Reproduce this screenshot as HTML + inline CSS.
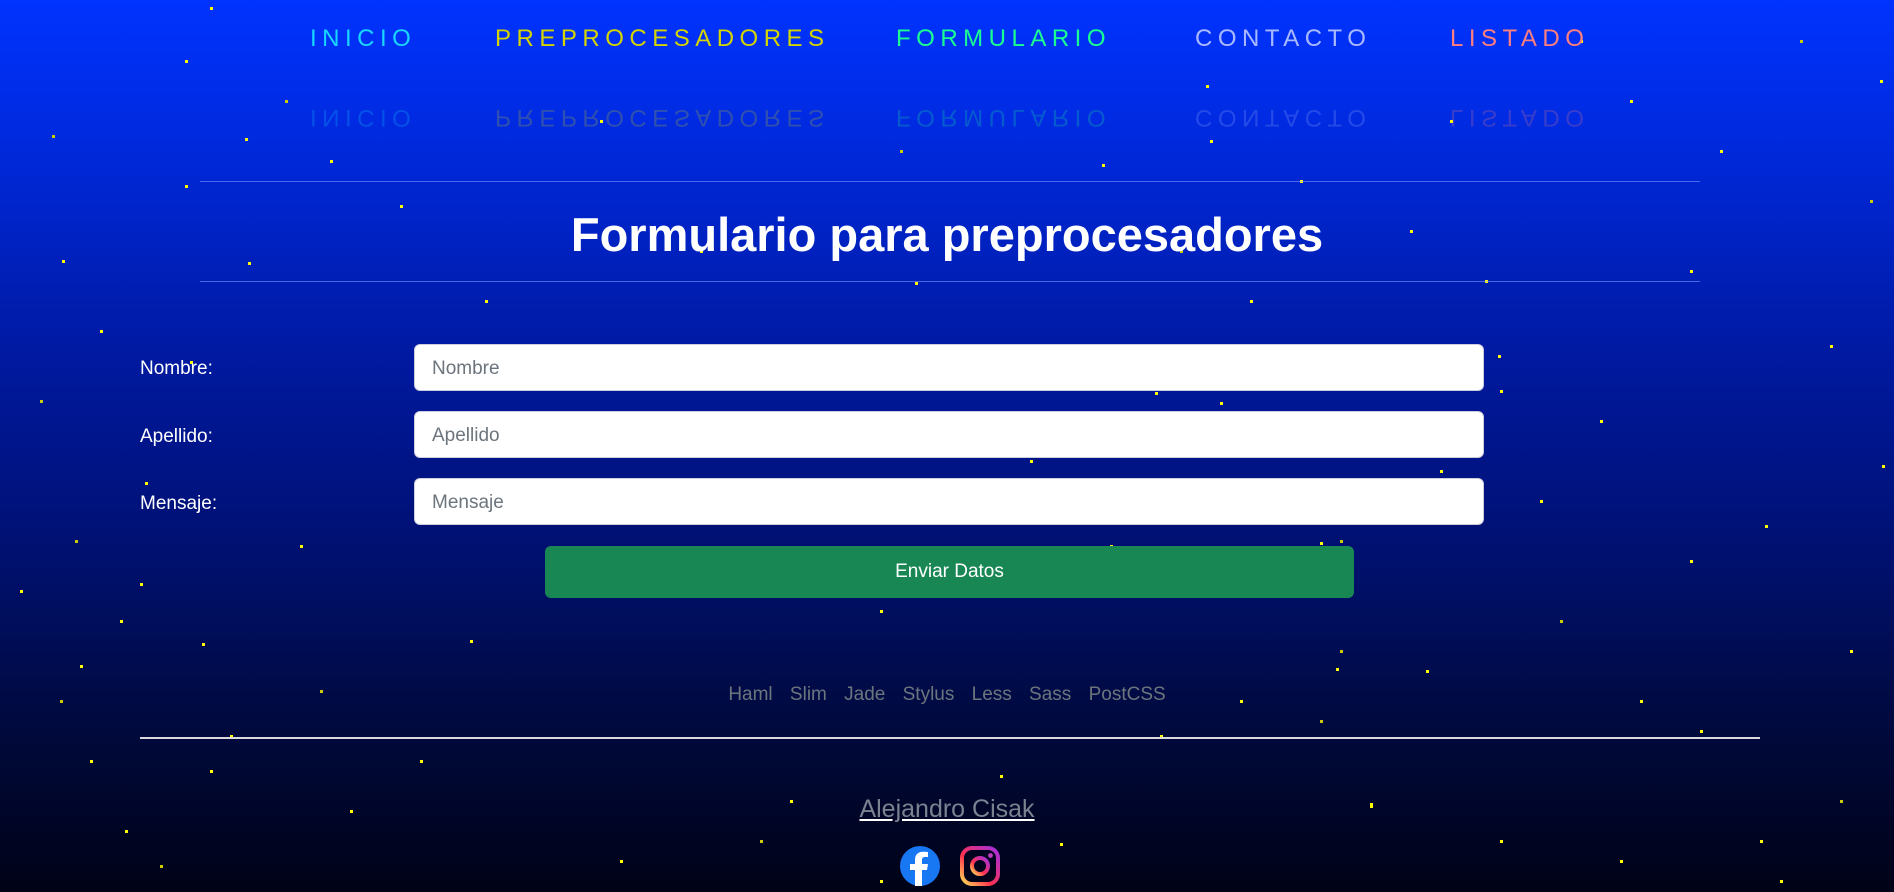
<!DOCTYPE html>
<html><head><meta charset="utf-8">
<style>
*{margin:0;padding:0;box-sizing:border-box}
html,body{width:1894px;height:892px;overflow:hidden}
body{position:relative;font-family:"Liberation Sans",sans-serif;background:linear-gradient(180deg,#0033ff 0%,#0028d8 18%,#0019a0 40%,#001070 62%,#000a40 80%,#000216 100%);}
.stars{position:absolute;left:0;top:0;width:3px;height:3px;background:transparent;
box-shadow:210px 7px #ff0,185px 60px #ff0,52px 135px #cc0,245px 138px #ff0,185px 185px #ff0,285px 100px #cc0,62px 260px #ff0,248px 262px #ff0,190px 361px #ff0,145px 482px #ff0,75px 540px #cc0,140px 583px #ff0,202px 643px #ff0,80px 665px #ff0,230px 735px #ff0,210px 770px #ff0,125px 830px #ff0,160px 865px #cc0,400px 205px #ff0,485px 300px #ff0,540px 372px #cc0,625px 432px #ff0,700px 455px #ff0,760px 510px #cc0,808px 565px #ff0,880px 610px #ff0,915px 282px #ff0,1102px 164px #ff0,1206px 85px #ff0,1155px 392px #ff0,1220px 402px #ff0,1030px 460px #ff0,1110px 545px #ff0,1320px 542px #ff0,1340px 540px #cc0,1440px 470px #ff0,1485px 280px #ff0,1498px 355px #ff0,1500px 390px #ff0,1560px 620px #cc0,1640px 700px #ff0,1700px 730px #ff0,1765px 525px #ff0,1830px 345px #ff0,1882px 465px #ff0,1870px 200px #cc0,1720px 150px #ff0,1630px 100px #ff0,1580px 40px #ff0,1690px 270px #ff0,1340px 650px #cc0,1160px 735px #ff0,1240px 700px #ff0,1370px 805px #ff0,1500px 840px #ff0,1780px 880px #ff0,1840px 800px #cc0,1620px 860px #ff0,1060px 843px #ff0,1000px 775px #ff0,790px 800px #ff0,760px 840px #cc0,880px 880px #ff0,620px 860px #ff0,420px 760px #ff0,350px 810px #ff0,320px 690px #cc0,470px 640px #ff0,560px 580px #ff0,300px 545px #ff0,40px 400px #cc0,100px 330px #ff0,20px 590px #ff0,1250px 300px #ff0,1180px 250px #cc0,1300px 180px #ff0,1410px 230px #ff0,1450px 120px #ff0,1210px 140px #ff0,900px 150px #cc0,700px 250px #ff0,330px 160px #ff0,600px 120px #ff0,1336px 668px #ff0,1426px 670px #ff0,1370px 803px #ff0,1320px 720px #cc0,90px 760px #ff0,120px 620px #ff0,60px 700px #cc0,1850px 650px #ff0,1760px 840px #ff0,1690px 560px #ff0,1880px 80px #ff0,1800px 40px #cc0,1600px 420px #ff0,1540px 500px #ff0;}
.nav{position:absolute;top:25px;left:0;width:100%;height:36px;font-size:24px;letter-spacing:5.5px;font-weight:300}
.nav span{position:absolute;top:0;white-space:nowrap}
.ref{top:95px;transform:scaleY(-1);opacity:.22}
hr.l{position:absolute;left:200px;width:1500px;border:0;border-top:1px solid rgba(140,160,255,.55)}
h1{position:absolute;top:207px;left:0;width:1894px;text-align:center;color:#fff;font-size:47px;font-weight:bold;letter-spacing:0}
.lab{position:absolute;left:140px;color:#fff;font-size:19px}
.inp{position:absolute;left:414px;width:1070px;height:47px;background:#fff;border:1px solid #ccd;border-radius:6px;color:#6c757d;font-size:19px;padding:13px 17px}
.btn{position:absolute;left:545px;top:546px;width:809px;height:52px;background:#198754;border-radius:6px;color:#fff;font-size:19px;text-align:center;line-height:52px}
.links{position:absolute;top:684px;left:0;width:1894px;text-align:center;color:#6c757d;font-size:19px;word-spacing:12px}
.author{position:absolute;top:795px;left:0;width:1894px;text-align:center;color:#7a8290;font-size:25px;text-decoration:underline;text-decoration-color:#fff}
</style></head><body>
<div class="stars"></div>
<div class="nav">
<span style="left:310px;color:#19d6ff">INICIO</span>
<span style="left:495px;color:#d4d400">PREPROCESADORES</span>
<span style="left:896px;color:#19ff90">FORMULARIO</span>
<span style="left:1195px;color:#a9b9ff">CONTACTO</span>
<span style="left:1450px;color:#ff7f7f">LISTADO</span>
</div>
<div class="nav ref">
<span style="left:310px;color:#19d6ff">INICIO</span>
<span style="left:495px;color:#d4d400">PREPROCESADORES</span>
<span style="left:896px;color:#19ff90">FORMULARIO</span>
<span style="left:1195px;color:#a9b9ff">CONTACTO</span>
<span style="left:1450px;color:#ff7f7f">LISTADO</span>
</div>
<hr class="l" style="top:181px">
<h1>Formulario para preprocesadores</h1>
<hr class="l" style="top:281px">
<div class="lab" style="top:358px">Nombre:</div>
<div class="inp" style="top:344px">Nombre</div>
<div class="lab" style="top:426px">Apellido:</div>
<div class="inp" style="top:411px">Apellido</div>
<div class="lab" style="top:493px">Mensaje:</div>
<div class="inp" style="top:478px">Mensaje</div>
<div class="btn">Enviar Datos</div>
<div class="links">Haml Slim Jade Stylus Less Sass PostCSS</div>
<div style="position:absolute;left:140px;top:737px;width:1620px;height:2px;background:#d8d8e0"></div>
<div class="author">Alejandro Cisak</div>
<svg style="position:absolute;left:900px;top:846px" width="40" height="40" viewBox="0 0 40 40">
<circle cx="20" cy="20" r="20" fill="#1877f2"/>
<path d="M22 40V24h5l1-6h-6v-4c0-2 1-3 3-3h3V6c-1 0-3-.3-5-.3-5 0-8 3-8 8V18h-5v6h5v16z" fill="#fff"/>
</svg>
<svg style="position:absolute;left:960px;top:846px" width="40" height="40" viewBox="0 0 40 40">
<defs><linearGradient id="g" x1="0" y1="1" x2="1" y2="0"><stop offset="0" stop-color="#fd5"/><stop offset=".4" stop-color="#ff3050"/><stop offset="1" stop-color="#a030e0"/></linearGradient></defs>
<rect x="2" y="2" width="36" height="36" rx="10" fill="none" stroke="url(#g)" stroke-width="4"/>
<circle cx="20" cy="20" r="8" fill="none" stroke="url(#g)" stroke-width="4"/>
<circle cx="30.5" cy="9.5" r="2.4" fill="#c03cc0"/>
</svg>
</body></html>
